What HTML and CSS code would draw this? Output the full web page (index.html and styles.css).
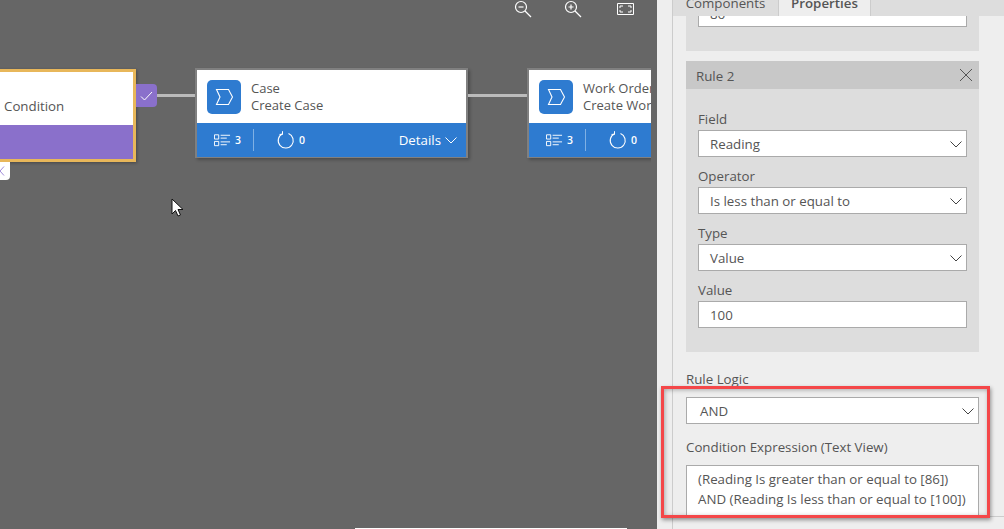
FILE: index.html
```html
<!DOCTYPE html>
<html lang="en">
<head>
  <meta charset="UTF-8">
  <title>Condition Rule Properties</title>
  <link rel="stylesheet" href="styles.css">
</head>
<body>
  <svg class="defs" width="0" height="0">
    <symbol id="stage" viewBox="0 0 34 34"><path d="M9.500 9.500h12l4 7.500-4 7.500h-12l3.500-7.500z" fill="none" stroke="#fff" stroke-width="1.100"/></symbol>
    <symbol id="list" viewBox="0 0 18 14"><path d="M.5 1.500h4.500v4.500H.5zM.5 8.500h4.500v4.500H.5z" fill="none" stroke="#fff"/><path d="M7 2h10M7 5h6.500M7 9h10M7 12h6.500" stroke="#fff"/></symbol>
    <symbol id="spin" viewBox="0 0 18 18"><path d="M5.500 2.800a7.500 7.500 0 1 0 6-.2" fill="none" stroke="#fff" stroke-width="1.100"/><path d="M5.500 .2v3.200H2.500" fill="none" stroke="#fff"/></symbol>
    <symbol id="chev" viewBox="0 0 12 7"><path d="M.5.500L6 6l5.500-5.500" fill="none" stroke="#444"/></symbol>
  </svg>

  <div class="canvas">
    <div class="tools">
      <svg width="18" height="18" viewBox="0 0 18 18"><circle cx="7" cy="7" r="5.500" fill="none" stroke="#fff" stroke-width="1.200"/><path d="M11 11l6 6" stroke="#fff" stroke-width="1.200"/><path d="M4.500 7h5" stroke="#fff" stroke-width="1.200"/></svg>
      <svg width="18" height="18" viewBox="0 0 18 18"><circle cx="7" cy="7" r="5.500" fill="none" stroke="#fff" stroke-width="1.200"/><path d="M11 11l6 6" stroke="#fff" stroke-width="1.200"/><path d="M4.500 7h5M7 4.500v5" stroke="#fff" stroke-width="1.200"/></svg>
      <svg width="17" height="12" viewBox="0 0 17 12"><path d="M.5.500h16v11H.5z" fill="none" stroke="#fff"/><path d="M3 5V3h3M11 3h3v2M14 7v2h-3M6 9H3V7" fill="none" stroke="#fff"/></svg>
    </div>

    <div class="diagram">
      <div class="cond-card">
        <div class="cond-top">Condition</div>
        <div class="cond-foot"></div>
      </div>
      <div class="cond-tab"><svg width="6" height="10" viewBox="0 0 6 10"><path d="M5 .5L1 5l4 4.500" fill="none" stroke="#a08bd8"/></svg></div>
      <div class="check"><svg width="13" height="10" viewBox="0 0 13 10"><path d="M1 5.500l3.500 3.500L12 1" fill="none" stroke="#fff"/></svg></div>
      <div class="link link-a"></div>

      <div class="card card-case">
        <div class="card-top">
          <svg class="stage"><use href="#stage"/></svg>
          <div class="card-title"><div>Case</div><div>Create Case</div></div>
        </div>
        <div class="card-foot">
          <svg class="ico-list"><use href="#list"/></svg><span class="num">3</span>
          <span class="sep"></span>
          <svg class="ico-spin"><use href="#spin"/></svg><span class="num">0</span>
          <span class="details">Details <svg width="12" height="7" viewBox="0 0 12 7"><path d="M.5.500L6 6l5.500-5.500" fill="none" stroke="#fff"/></svg></span>
        </div>
      </div>

      <div class="link link-b"></div>

      <div class="card card-work">
        <div class="card-top">
          <svg class="stage"><use href="#stage"/></svg>
          <div class="card-title"><div>Work Order</div><div>Create Work Order</div></div>
        </div>
        <div class="card-foot">
          <svg class="ico-list"><use href="#list"/></svg><span class="num">3</span>
          <span class="sep"></span>
          <svg class="ico-spin"><use href="#spin"/></svg><span class="num">0</span>
        </div>
      </div>
    </div>

    <svg class="cursor" width="13" height="20" viewBox="0 0 13 20"><path d="M1 1v15l3.500-3.500 2.500 5.500 2.500-1-2.500-5.500h5z" fill="#fff" stroke="#111"/></svg>
    <div class="scrollbar"></div>
  </div>

  <div class="panel">
    <div class="tabs">
      <div class="tab">Components</div>
      <div class="tab active">Properties</div>
    </div>
    <div class="scroller">
      <div class="rule rule-first">
        <div class="input">86</div>
      </div>

      <div class="rule">
        <div class="rule-head"><span>Rule 2</span>
          <svg width="14" height="14" viewBox="0 0 14 14"><path d="M1 1l12 12M13 1L1 13" stroke="#555"/></svg>
        </div>
        <div class="rule-body">
          <label>Field</label>
          <div class="input select">Reading<svg class="chev"><use href="#chev"/></svg></div>
          <label>Operator</label>
          <div class="input select">Is less than or equal to<svg class="chev"><use href="#chev"/></svg></div>
          <label>Type</label>
          <div class="input select">Value<svg class="chev"><use href="#chev"/></svg></div>
          <label>Value</label>
          <div class="input">100</div>
        </div>
      </div>

      <label class="logic-label">Rule Logic</label>
      <div class="input select wide">AND<svg class="chev"><use href="#chev"/></svg></div>
      <label class="expr-label">Condition Expression (Text View)</label>
      <div class="expr">(Reading Is greater than or equal to [86])<br>AND (Reading Is less than or equal to [100])</div>
    </div>
    <div class="panel-foot"></div>
  </div>

  <div class="callout"></div>
</body>
</html>
```

FILE: styles.css
```css
html, body { margin: 0; height: 100%; }
body { display: flex; width: 1004px; height: 529px; overflow: hidden; font-family: "Open Sans", "Liberation Sans", sans-serif; font-size: 13.3px; color: #555; background: #eee; position: relative; }
.defs { position: absolute; }

/* canvas */
.canvas { width: 657px; flex: none; background: #666; position: relative; overflow: hidden; }
.tools { position: absolute; top: 0; left: 514px; display: flex; align-items: flex-start; }
.tools svg:nth-child(1) { margin-right: 32px; }
.tools svg:nth-child(2) { margin-right: 35px; }
.tools svg:nth-child(3) { margin-top: 3px; }
.diagram { position: absolute; left: 0; top: 0; width: 651px; height: 200px; overflow: hidden; }

.cond-card { position: absolute; left: -10px; top: 69px; width: 146px; height: 93px; box-sizing: border-box; border: 3px solid #e8b75a; box-shadow: 1px 1px 3px rgba(0,0,0,.3); display: flex; flex-direction: column; background: #fff; }
.cond-top { height: 53px; padding: 25px 0 0 11px; box-sizing: border-box; line-height: 18px; }
.cond-foot { flex: 1; background: #8a70cb; }
.cond-tab { position: absolute; left: -6px; top: 162px; width: 16px; height: 18px; background: #fff; border-radius: 0 0 4px 0; display: flex; align-items: center; justify-content: flex-end; padding-right: 5px; box-sizing: border-box; }
.check { position: absolute; left: 136px; top: 84px; width: 21px; height: 23px; background: #8a70cb; border-radius: 0 4px 4px 0; display: flex; align-items: center; justify-content: center; }
.link { position: absolute; top: 94px; height: 3px; background: #bbb; }
.link-a { left: 157px; width: 38px; }
.link-b { left: 468px; width: 59px; }

.card { position: absolute; top: 68px; width: 273px; height: 90px; box-sizing: border-box; border: 2px solid #808080; border-bottom-width: 1px; box-shadow: 2px 2px 3px rgba(0,0,0,.25); background: #fff; display: flex; flex-direction: column; }
.card-case { left: 195px; }
.card-work { left: 527px; }
.card-top { height: 53px; display: flex; align-items: center; padding-left: 10px; flex: none; }
.stage { width: 34px; height: 34px; background: #2e7bd0; border-radius: 5px; flex: none; }
.card-title { margin-left: 10px; font-size: 13px; line-height: 17px; white-space: nowrap; }
.card-foot { flex: 1; background: #2e7bd0; color: #fff; display: flex; align-items: center; padding: 0 9px 0 17px; font-size: 10.5px; font-weight: 600; }
.ico-list { width: 17px; height: 14px; }
.ico-spin { width: 18px; height: 18px; margin-left: 1px; }
.num { margin-left: 4px; }
.sep { width: 1px; height: 22px; background: #7fb0e4; margin: 0 22px 0 12px; }
.details { margin-left: auto; font-size: 13.3px; font-weight: 400; display: flex; align-items: center; gap: 4px; }

.cursor { position: absolute; left: 171px; top: 198px; }
.scrollbar { position: absolute; left: 355px; top: 528px; width: 272px; height: 1px; background: #fff; }

/* right panel */
.panel { flex: 1; margin-left: 15px; border-left: 1px solid #ccc; display: flex; flex-direction: column; min-width: 0; }
.tabs { height: 16px; flex: none; display: flex; align-items: flex-end; background: #ddd; position: relative; z-index: 1; }
.tab { height: 16px; line-height: 7px; border-right: 1px solid #ccc; box-sizing: border-box; white-space: nowrap; width: 106px; text-align: center; overflow: hidden; }
.tab.active { background: #eee; font-weight: 600; width: 92px; }
.scroller { height: 500px; flex: none; overflow: hidden; padding: 0 25px 0 13px; }
.rule { background: #ddd; }
.rule-first { margin-top: -16px; padding: 0 12px; height: 51px; box-sizing: border-box; margin-bottom: 10px; }
.rule-head { height: 28px; background: #c8c8c8; display: flex; align-items: center; justify-content: space-between; padding: 0 6px 0 10px; }
.rule-head span { padding-top: 2px; }
.rule-body { height: 263px; box-sizing: border-box; padding: 21px 12px 0; }
label { display: block; line-height: 18px; box-sizing: border-box; }
.rule-body label { height: 30px; padding-top: 10px; }
.rule-body label:first-child { height: 20px; padding-top: 0; }
.input { height: 27px; box-sizing: border-box; background: #fff; border: 1px solid #aaa; padding: 1px 0 0 11px; line-height: 25px; position: relative; }
.select .chev { position: absolute; right: 4px; top: 10px; width: 12px; height: 7px; }
.wide { padding-left: 13px; }
.logic-label { margin-top: 18px; height: 27px; }
.expr-label { margin-top: 14px; height: 27px; }
.expr { height: 52px; box-sizing: border-box; background: #fff; border: 1px solid #aaa; border-bottom: 0; padding: 3px 0 0 11px; line-height: 20px; white-space: nowrap; }
.panel-foot { flex: 1; border-top: 1px solid #ccc; }

/* highlight drawn over the screenshot */
.callout { position: absolute; left: 661px; top: 386px; width: 329px; height: 132px; box-sizing: border-box; border: 3px solid #f44749; box-shadow: 1px 2px 4px rgba(0,0,0,.4), inset 1px 1px 4px rgba(0,0,0,.3); }
```
